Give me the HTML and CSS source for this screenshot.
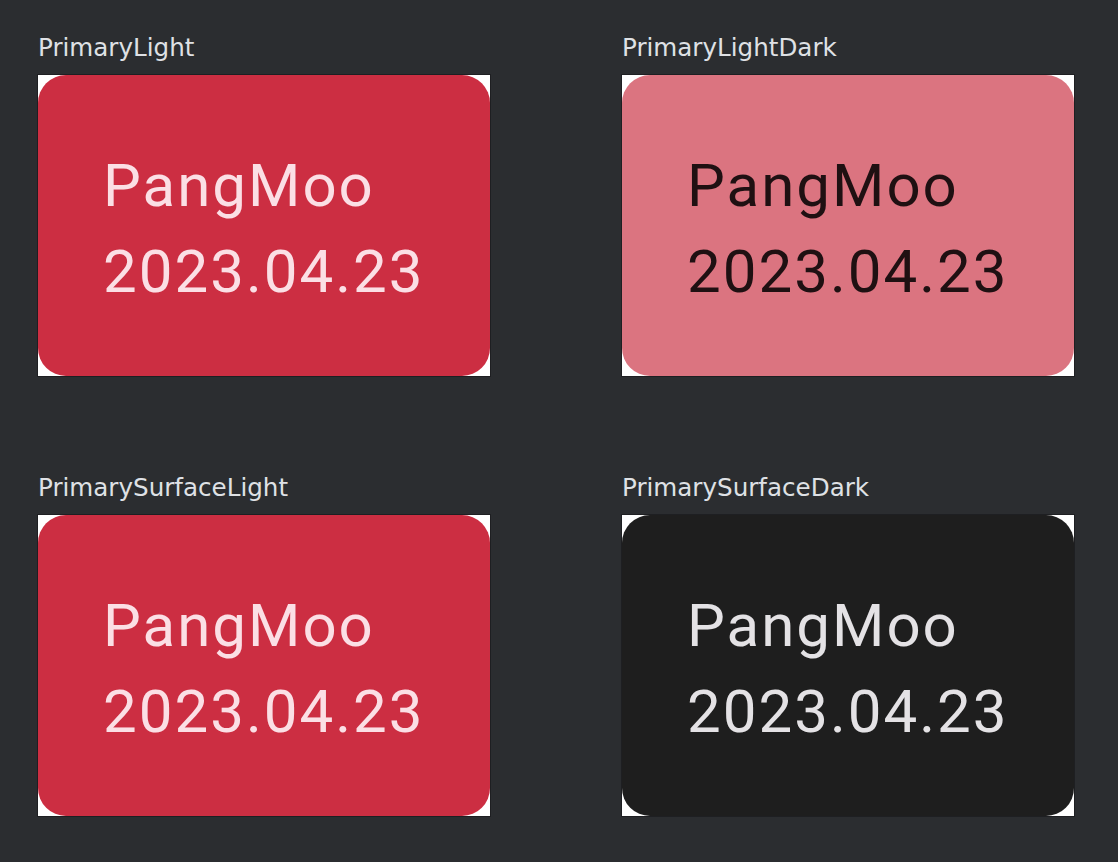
FILE: index.html
```html
<!DOCTYPE html>
<html lang="en">
<head>
  <meta charset="UTF-8">
  <meta name="viewport" content="width=device-width, initial-scale=1.0">
  <title>Previews</title>
  <link rel="stylesheet" href="styles.css">
</head>
<body>
  <div class="grid">
    <div class="preview">
      <div class="label">PrimaryLight</div>
      <div class="frame">
        <div class="card card-red">
          <div class="line">PangMoo</div>
          <div class="line">2023.04.23</div>
        </div>
      </div>
    </div>
    <div class="preview">
      <div class="label">PrimaryLightDark</div>
      <div class="frame">
        <div class="card card-pink">
          <div class="line">PangMoo</div>
          <div class="line">2023.04.23</div>
        </div>
      </div>
    </div>
    <div class="preview">
      <div class="label">PrimarySurfaceLight</div>
      <div class="frame">
        <div class="card card-red">
          <div class="line">PangMoo</div>
          <div class="line">2023.04.23</div>
        </div>
      </div>
    </div>
    <div class="preview">
      <div class="label">PrimarySurfaceDark</div>
      <div class="frame">
        <div class="card card-dark">
          <div class="line">PangMoo</div>
          <div class="line">2023.04.23</div>
        </div>
      </div>
    </div>
  </div>
</body>
</html>
```

FILE: styles.css
```css
body {
  margin: 0;
  padding: 0;
  background-color: #2b2d30;
  font-family: "DejaVu Sans", sans-serif;
}
.grid {
  display: grid;
  grid-template-columns: 454px 454px;
  column-gap: 130px;
  row-gap: 97px;
  padding: 34px 0 0 37px;
}
.label {
  font-size: 24.6px;
  line-height: 28px;
  color: #dfe1e5;
  margin-left: 1px;
  margin-bottom: 12px;
}
.frame {
  border: 1px solid #1e1f22;
  background: #fff;
  width: 452px;
  height: 301px;
}
.card {
  box-sizing: border-box;
  width: 452px;
  height: 301px;
  border-radius: 28px;
  padding: 68px 0 0 65px;
  font-family: Roboto, sans-serif;
  font-size: 60px;
  line-height: 86px;
  letter-spacing: 2px;
}
.card-red {
  background-color: #cc2e42;
  color: #fbdfe5;
}
.card-pink {
  background-color: #db7480;
  color: #1f1012;
}
.card-dark {
  background-color: #1e1e1e;
  color: #e4e2e5;
}
```
